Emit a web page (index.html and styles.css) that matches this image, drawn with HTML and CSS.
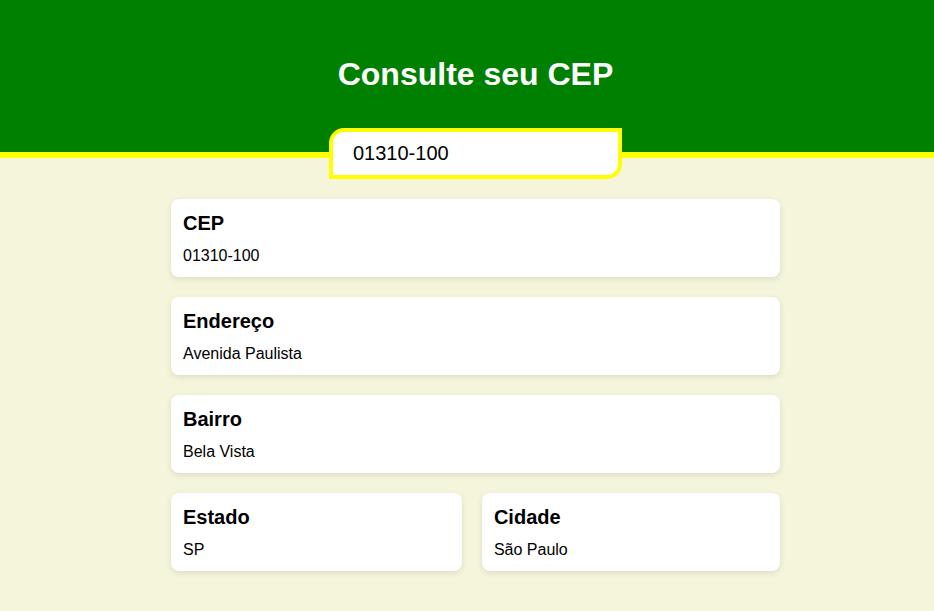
FILE: index.html
```html
<!DOCTYPE html>
<html lang="pt-BR">
<head>
<meta charset="utf-8">
<title>Consulte seu CEP</title>
<link rel="stylesheet" href="styles.css">
</head>
<body>
<header class="header">
  <h1 class="title">Consulte seu CEP</h1>
</header>
<div class="search">
  <input class="search-input" type="text" value="01310-100">
</div>
<main class="results">
  <div class="card">
    <h3 class="card-label">CEP</h3>
    <p class="card-value">01310-100</p>
  </div>
  <div class="card">
    <h3 class="card-label">Endereço</h3>
    <p class="card-value">Avenida Paulista</p>
  </div>
  <div class="card">
    <h3 class="card-label">Bairro</h3>
    <p class="card-value">Bela Vista</p>
  </div>
  <div class="row">
    <div class="card card-flex">
      <h3 class="card-label">Estado</h3>
      <p class="card-value">SP</p>
    </div>
    <div class="card card-flex">
      <h3 class="card-label">Cidade</h3>
      <p class="card-value">São Paulo</p>
    </div>
  </div>
</main>
</body>
</html>
```
FILE: styles.css
```css
* { box-sizing: border-box; }
html, body {
  margin: 0;
  padding: 0;
  background: #f5f5dc;
  font-family: "Liberation Sans", Arial, sans-serif;
  color: #000;
  min-height: 100%;
}
.header {
  background: #008000;
  height: 158px;
  border-bottom: 6px solid #ffff00;
  padding: 56px 0 0 17px;
}
.title {
  margin: 0;
  color: #fff;
  font-size: 32px;
  line-height: 37px;
  font-weight: bold;
  text-align: center;
}
.search {
  display: flex;
  justify-content: center;
  padding-left: 17px;
  margin-top: -30px;
  position: relative;
}
.search-input {
  width: 293px;
  height: 51px;
  border: 4px solid #ffff00;
  border-radius: 15px 0 15px 0;
  background: #fff;
  padding: 0 0 0 20px;
  font-family: "Liberation Sans", Arial, sans-serif;
  font-size: 20px;
  color: #000;
  outline: none;
}
.results {
  width: 609px;
  margin: 20px auto 0;
  position: relative;
  left: 8.5px;
  display: flex;
  flex-direction: column;
  gap: 20px;
  padding-bottom: 40px;
}
.card {
  background: #fff;
  border-radius: 8px;
  padding: 13px 12px 12px;
  box-shadow: 0 2px 6px rgba(0, 0, 0, 0.1);
}
.card-label {
  margin: 0 0 12px;
  font-size: 20px;
  line-height: 23px;
  font-weight: bold;
}
.card-value {
  margin: 0;
  font-size: 16px;
  line-height: 18px;
}
.row {
  display: flex;
  gap: 20px;
}
.card-flex {
  flex: 1 1 auto;
}
```
